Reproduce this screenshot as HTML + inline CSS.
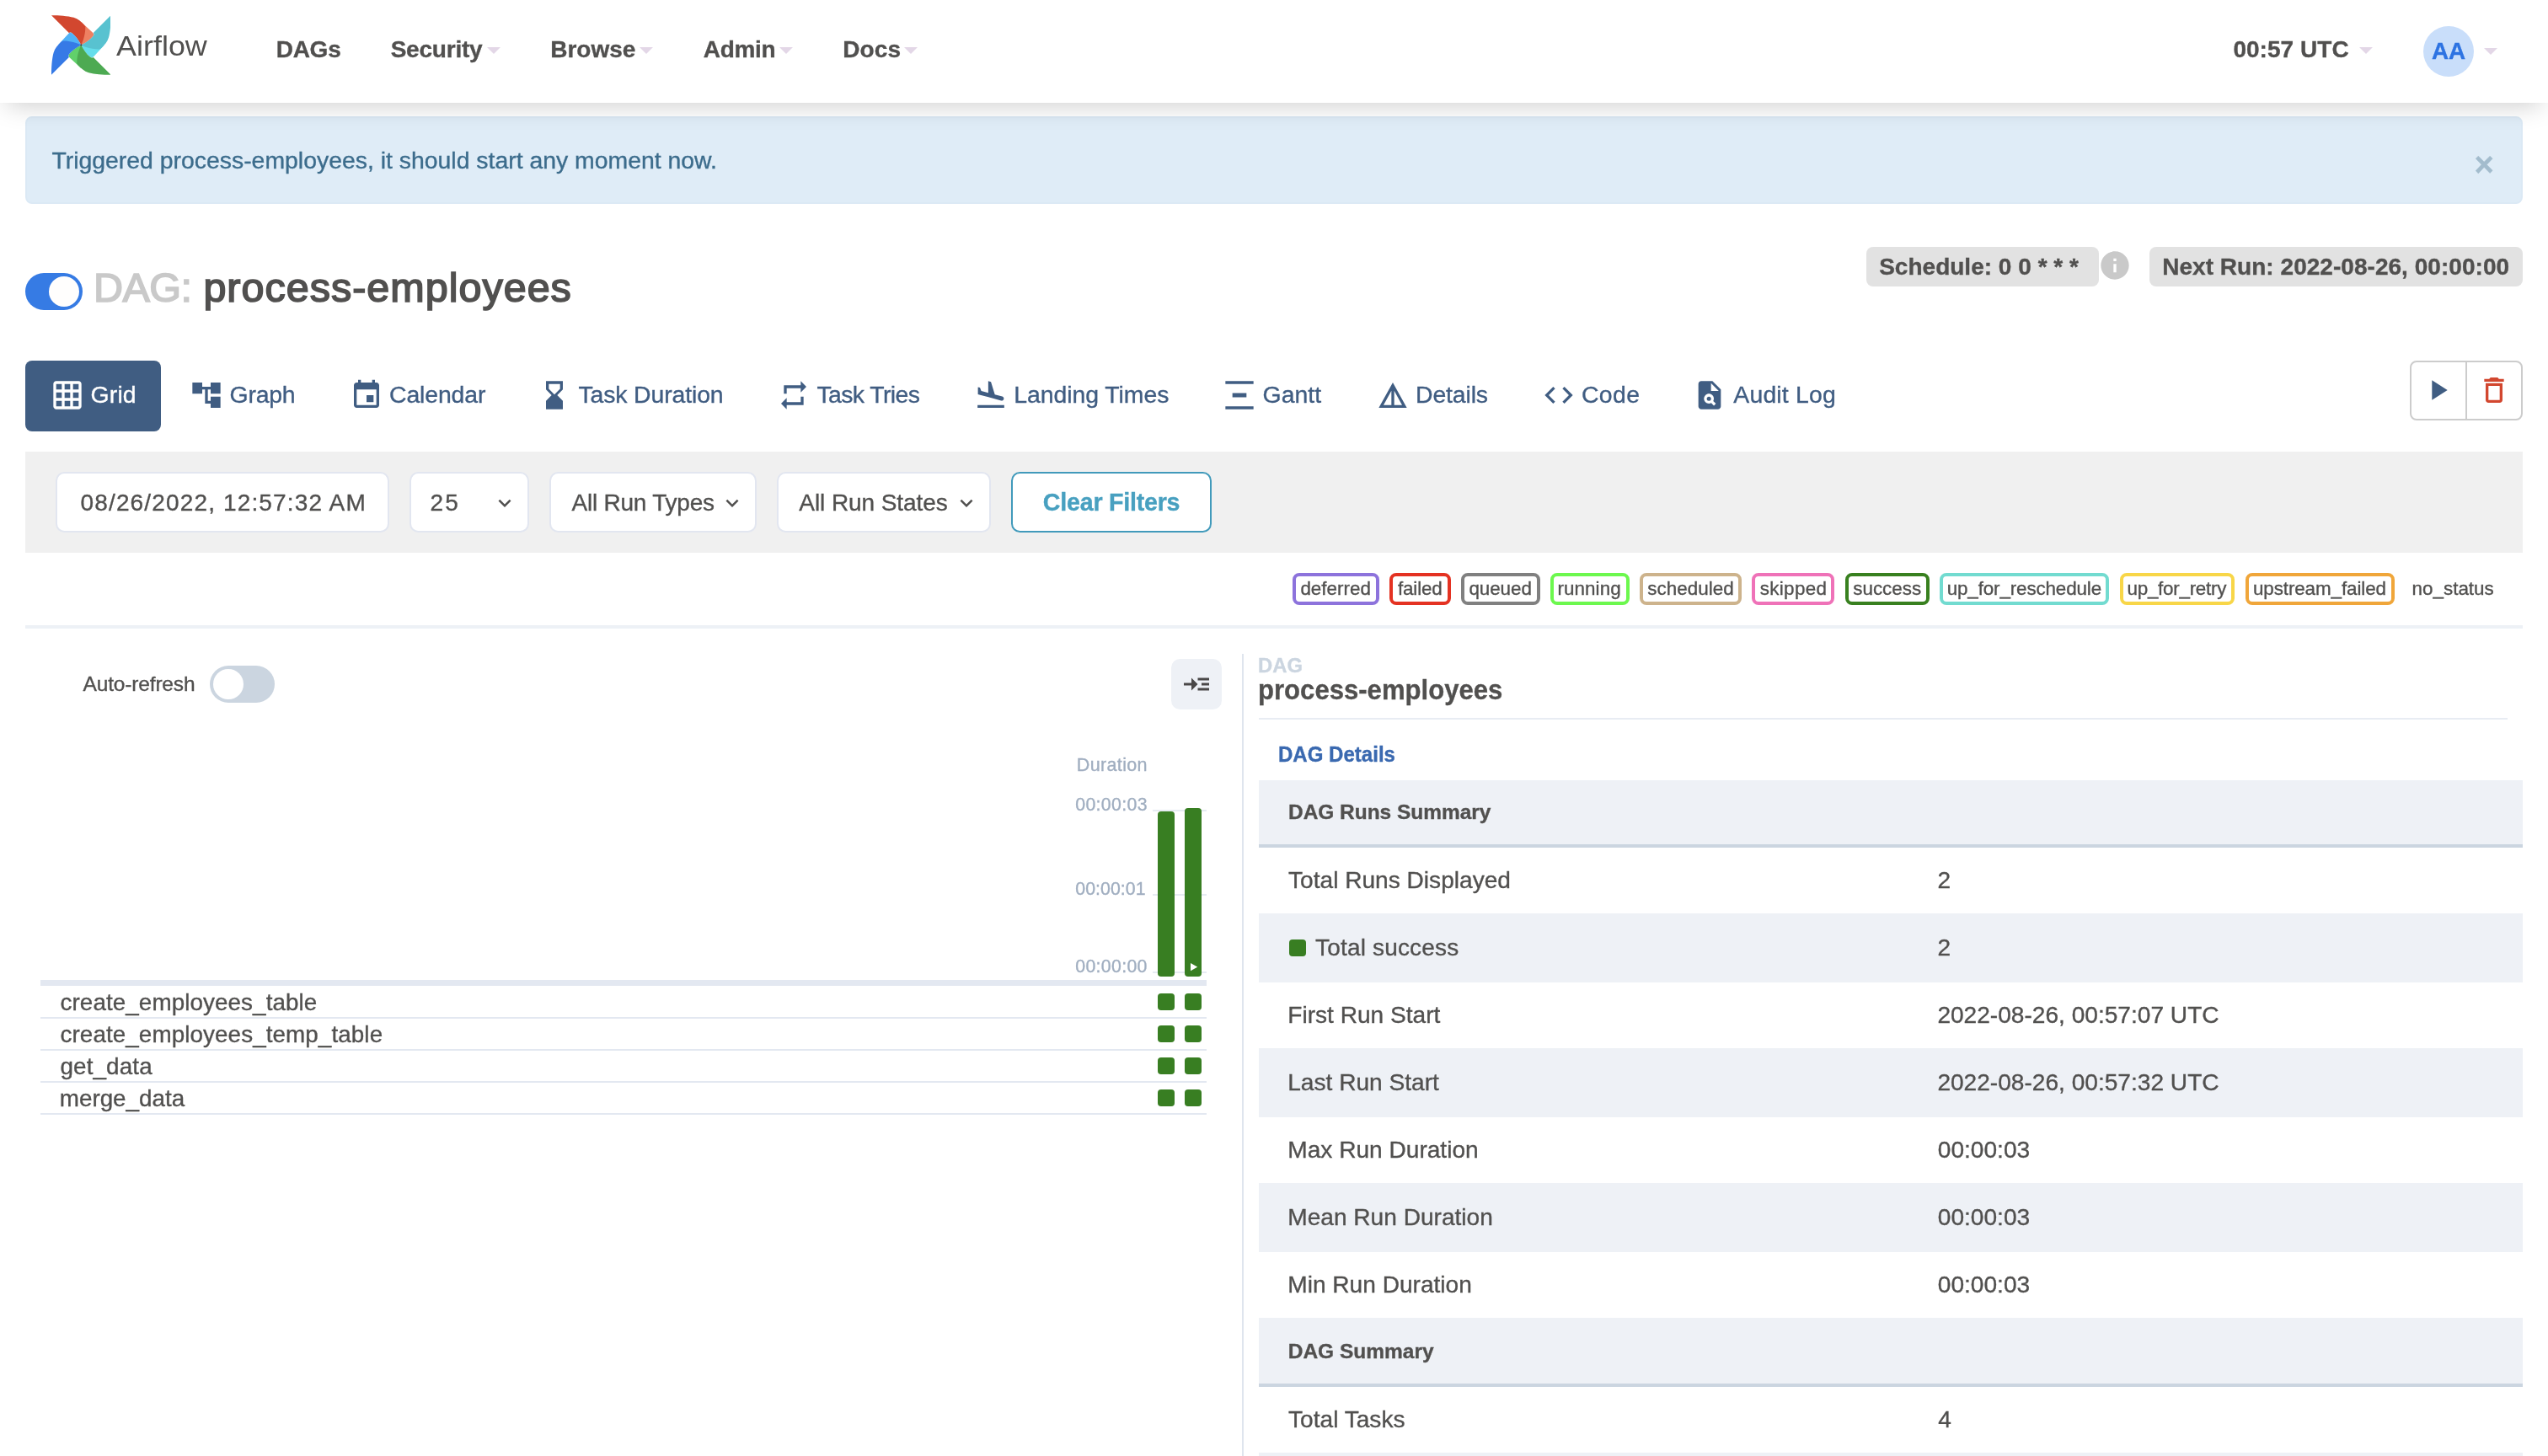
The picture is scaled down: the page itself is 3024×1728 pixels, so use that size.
<!DOCTYPE html>
<html lang="en"><head><meta charset="utf-8"><title>process-employees - Grid - Airflow</title>
<style>
html,body{margin:0;padding:0;background:#fff}
body{width:3024px;height:1728px;overflow:hidden;position:relative;font-family:"Liberation Sans",Arial,Helvetica,sans-serif}
.b{position:absolute;display:block}
.t{position:absolute;display:block;white-space:pre;margin:0;-webkit-text-stroke:0.35px currentColor}
</style></head><body>
<div id="root" style="position:absolute;left:0;top:0;width:3024px;height:1728px;will-change:transform">
<div id="navbar" class="b" style="left:0;top:0;width:3024px;height:122px;background:#fff;box-shadow:0 10px 28px -8px rgba(0,0,0,.21);z-index:5"></div>
<div id="navc" class="b" style="left:0;top:0;width:3024px;height:122px;z-index:6">
<svg class="b" style="left:60.7px;top:18px" width="70.6" height="71" viewBox="0 0 100 100"><g transform="rotate(0 50 50)"><path d="M50,11 L69.5,29 Q72.5,32 70,35 C65,41 59,46 50,50 L52,30 Z" fill="#ee8062"/><path d="M0,0 C13,0 27,0.8 37.4,3.7 C45,5.8 50,11 55,16 L57,19 C57.5,30 54,42 50,50 C46,42 41,35 35,30 Q32,27.5 29.5,29.5 Z" fill="#d2472f"/></g><g transform="rotate(90 50 50)"><path d="M50,11 L69.5,29 Q72.5,32 70,35 C65,41 59,46 50,50 L52,30 Z" fill="#66deeb"/><path d="M0,0 C13,0 27,0.8 37.4,3.7 C45,5.8 50,11 55,16 L57,19 C57.5,30 54,42 50,50 C46,42 41,35 35,30 Q32,27.5 29.5,29.5 Z" fill="#58c2d0"/></g><g transform="rotate(180 50 50)"><path d="M50,11 L69.5,29 Q72.5,32 70,35 C65,41 59,46 50,50 L52,30 Z" fill="#61d06b"/><path d="M0,0 C13,0 27,0.8 37.4,3.7 C45,5.8 50,11 55,16 L57,19 C57.5,30 54,42 50,50 C46,42 41,35 35,30 Q32,27.5 29.5,29.5 Z" fill="#4daa52"/></g><g transform="rotate(270 50 50)"><path d="M50,11 L69.5,29 Q72.5,32 70,35 C65,41 59,46 50,50 L52,30 Z" fill="#50b2f7"/><path d="M0,0 C13,0 27,0.8 37.4,3.7 C45,5.8 50,11 55,16 L57,19 C57.5,30 54,42 50,50 C46,42 41,35 35,30 Q32,27.5 29.5,29.5 Z" fill="#367ae6"/></g><circle cx="50" cy="50" r="1.6" fill="#4a4848"/></svg>
<span class="t " style="left:137.60px;top:38.00px;font-size:33.40px;line-height:33.40px;color:#51504f;-webkit-text-stroke:0;transform:scaleX(1.0761);transform-origin:0 0;">Airflow</span>
<span class="t " style="left:327.68px;top:45.00px;font-size:28.00px;line-height:28.00px;color:#51504f;font-weight:700;letter-spacing:-0.253px;">DAGs</span>
<span class="t " style="left:463.66px;top:45.00px;font-size:28.00px;line-height:28.00px;color:#51504f;font-weight:700;letter-spacing:-0.211px;">Security</span>
<div class="b" style="left:578px;top:56px;width:0;height:0;border-left:8px solid transparent;border-right:8px solid transparent;border-top:8px solid #e3d7e7"></div>
<span class="t " style="left:653.18px;top:45.00px;font-size:28.00px;line-height:28.00px;color:#51504f;font-weight:700;letter-spacing:0.016px;">Browse</span>
<div class="b" style="left:759px;top:56px;width:0;height:0;border-left:8px solid transparent;border-right:8px solid transparent;border-top:8px solid #e3d7e7"></div>
<span class="t " style="left:834.80px;top:45.00px;font-size:28.00px;line-height:28.00px;color:#51504f;font-weight:700;letter-spacing:-0.300px;">Admin</span>
<div class="b" style="left:925px;top:56px;width:0;height:0;border-left:8px solid transparent;border-right:8px solid transparent;border-top:8px solid #e3d7e7"></div>
<span class="t " style="left:1000.18px;top:45.00px;font-size:28.00px;line-height:28.00px;color:#51504f;font-weight:700;letter-spacing:0.160px;">Docs</span>
<div class="b" style="left:1073px;top:56px;width:0;height:0;border-left:8px solid transparent;border-right:8px solid transparent;border-top:8px solid #e3d7e7"></div>
<span class="t " style="left:2650.38px;top:45.00px;font-size:28.00px;line-height:28.00px;color:#51504f;font-weight:700;letter-spacing:0.050px;">00:57 UTC</span>
<div class="b" style="left:2800px;top:56px;width:0;height:0;border-left:8px solid transparent;border-right:8px solid transparent;border-top:8px solid #e3d7e7"></div>
<div class="b " style="left:2876px;top:31px;width:60px;height:60px;background:#c9defa;border-radius:50%"></div>
<span class="t " style="left:2885.60px;top:47.00px;font-size:27.40px;line-height:27.40px;color:#2d73e2;font-weight:700;transform:scaleX(1.0161);transform-origin:0 0;">AA</span>
<div class="b" style="left:2948px;top:56.5px;width:0;height:0;border-left:8px solid transparent;border-right:8px solid transparent;border-top:8px solid #e3d7e7"></div>
</div>
<div class="b " style="left:30px;top:138px;width:2964px;height:104px;background:#dfecf7;border-radius:8px;border:2px solid #dbe9f5;box-sizing:border-box"></div>
<span class="t " style="left:61.43px;top:176.00px;font-size:28.40px;line-height:28.40px;color:#3c6c8c;">Triggered process-employees, it should start any moment now.</span>
<span class="t " style="left:2936.40px;top:175.00px;font-size:40.00px;line-height:40.00px;color:#a3bccd;font-weight:700;">×</span>
<div class="b " style="left:30px;top:324px;width:68px;height:44px;background:#367be4;border-radius:22px"></div>
<div class="b " style="left:58px;top:328px;width:36px;height:36px;background:#fffefd;border-radius:50%"></div>
<span class="t " style="left:110.97px;top:317.00px;font-size:48.50px;line-height:48.50px;color:#c9c9c9;letter-spacing:-0.512px;-webkit-text-stroke:1.70px #c9c9c9;">DAG:</span>
<span class="t " style="left:241.40px;top:317.00px;font-size:48.50px;line-height:48.50px;color:#51504f;letter-spacing:0.997px;-webkit-text-stroke:1.70px #51504f;">process-employees</span>
<div class="b " style="left:2215px;top:293px;width:276px;height:47px;background:#e2e2e2;border-radius:8px"></div>
<span class="t " style="left:2230.16px;top:303.00px;font-size:28.00px;line-height:28.00px;color:#51504f;font-weight:700;letter-spacing:0.013px;">Schedule: 0 0 * * *</span>
<svg class="b" style="left:2490px;top:295px;" width="40" height="40" viewBox="0 0 24 24"><path fill="#c9c9c9" d="M12 2C6.48 2 2 6.48 2 12s4.48 10 10 10 10-4.48 10-10S17.52 2 12 2zm1 15h-2v-6h2v6zm0-8h-2V7h2v2z"/></svg>
<div class="b " style="left:2551px;top:293px;width:443px;height:47px;background:#e2e2e2;border-radius:8px"></div>
<span class="t " style="left:2566.18px;top:303.00px;font-size:28.00px;line-height:28.00px;color:#51504f;font-weight:700;letter-spacing:0.036px;">Next Run: 2022-08-26, 00:00:00</span>
<div class="b " style="left:30px;top:428px;width:161px;height:84px;background:#405d82;border-radius:8px"></div>
<svg class="b" style="left:59.7px;top:449px;" width="40" height="40" viewBox="0 0 24 24"><path fill="#fff" d="M20 2H4c-1.1 0-2 .9-2 2v16c0 1.1.9 2 2 2h16c1.1 0 2-.9 2-2V4c0-1.1-.9-2-2-2zM8 20H4v-4h4v4zm0-6H4v-4h4v4zm0-6H4V4h4v4zm6 12h-4v-4h4v4zm0-6h-4v-4h4v4zm0-6h-4V4h4v4zm6 12h-4v-4h4v4zm0-6h-4v-4h4v4zm0-6h-4V4h4v4z"/></svg>
<span class="t " style="left:107.58px;top:454.00px;font-size:28.40px;line-height:28.40px;color:#fff;letter-spacing:0.149px;">Grid</span>
<svg class="b" style="left:224.7px;top:449px;" width="40" height="40" viewBox="0 0 24 24"><path fill="#405d82" d="M22 11V3h-7v3H9V3H2v8h7V8h2v10h4v3h7v-8h-7v3h-2V8h2v3z"/></svg>
<span class="t " style="left:272.58px;top:454.00px;font-size:28.40px;line-height:28.40px;color:#405d82;letter-spacing:-0.207px;">Graph</span>
<svg class="b" style="left:415px;top:449px;" width="40" height="40" viewBox="0 0 24 24"><path fill="#405d82" d="M17 12h-5v5h5v-5zM16 1v2H8V1H6v2H5c-1.11 0-1.99.9-1.99 2L3 19c0 1.1.89 2 2 2h14c1.1 0 2-.9 2-2V5c0-1.1-.9-2-2-2h-1V1h-2zm3 18H5V8h14v11z"/></svg>
<span class="t " style="left:462.08px;top:454.00px;font-size:28.40px;line-height:28.40px;color:#405d82;letter-spacing:-0.137px;">Calendar</span>
<svg class="b" style="left:638px;top:449px;" width="40" height="40" viewBox="0 0 24 24"><path fill="#405d82" d="M18 22l-.01-6L14 12l3.99-4.01L18 2H6v6l4 4-4 3.99V22h12zM8 7.5V4h8v3.5l-4 4-4-4z"/></svg>
<span class="t " style="left:686.43px;top:454.00px;font-size:28.40px;line-height:28.40px;color:#405d82;letter-spacing:-0.116px;">Task Duration</span>
<svg class="b" style="left:922px;top:449px;" width="40" height="40" viewBox="0 0 24 24"><path fill="#405d82" d="M7 7h10v3l4-4-4-4v3H5v6h2V7zm10 10H7v-3l-4 4 4 4v-3h12v-6h-2v4z"/></svg>
<span class="t " style="left:969.43px;top:454.00px;font-size:28.40px;line-height:28.40px;color:#405d82;letter-spacing:-0.582px;">Task Tries</span>
<svg class="b" style="left:1156px;top:449px;" width="40" height="40" viewBox="0 0 24 24"><path fill="#405d82" d="M2.5 19h19v2h-19zm7.18-5.73l4.35 1.16 5.31 1.42c.8.21 1.62-.26 1.84-1.06.21-.8-.26-1.62-1.06-1.84l-5.31-1.42-2.76-9.02L10.12 2v8.28L5.15 8.95l-.93-2.32-1.45-.39v5.17l1.6.43 5.31 1.43z"/></svg>
<span class="t " style="left:1203.23px;top:454.00px;font-size:28.40px;line-height:28.40px;color:#405d82;letter-spacing:-0.040px;">Landing Times</span>
<svg class="b" style="left:1450.5px;top:449px;" width="40" height="40" viewBox="0 0 24 24"><path fill="#405d82" d="M22 2v2H2V2h20zM7 10.5v3h10v-3H7zM2 20v2h20v-2H2z"/></svg>
<span class="t " style="left:1498.58px;top:454.00px;font-size:28.40px;line-height:28.40px;color:#405d82;letter-spacing:0.031px;">Gantt</span>
<svg class="b" style="left:1632.5px;top:449px;" width="40" height="40" viewBox="0 0 24 24"><path fill="#405d82" d="M12 3L2 21h20L12 3zm1 5.92L18.6 19H13V8.92zm-2 0V19H5.4L11 8.92z"/></svg>
<span class="t " style="left:1680.03px;top:454.00px;font-size:28.40px;line-height:28.40px;color:#405d82;letter-spacing:-0.133px;">Details</span>
<svg class="b" style="left:1830px;top:449px;" width="40" height="40" viewBox="0 0 24 24"><path fill="#405d82" d="M9.4 16.6L4.8 12l4.6-4.6L8 6l-6 6 6 6 1.4-1.4zm5.2 0l4.6-4.6-4.6-4.6L16 6l6 6-6 6-1.4-1.4z"/></svg>
<span class="t " style="left:1876.88px;top:454.00px;font-size:28.40px;line-height:28.40px;color:#405d82;letter-spacing:0.460px;">Code</span>
<svg class="b" style="left:2008.5px;top:449px;" width="40" height="40" viewBox="0 0 24 24"><path fill="#405d82" d="M14 2H6c-1.1 0-2 .9-2 2v16c0 1.1.9 2 2 2h12c1.1 0 2-.9 2-2V8l-6-6zm1.04 17.45l-1.88-1.88c-1.33.71-3.01.53-4.13-.59-1.37-1.37-1.37-3.58 0-4.95 1.37-1.37 3.58-1.37 4.95 0 1.12 1.12 1.31 2.8.59 4.13l1.88 1.88-1.41 1.41zM13 9V3.5L18.5 9H13z"/><circle cx="11.5" cy="14.5" r="1.5" fill="#405d82"/></svg>
<span class="t " style="left:2057.30px;top:454.00px;font-size:28.40px;line-height:28.40px;color:#405d82;letter-spacing:0.177px;">Audit Log</span>
<div class="b " style="left:2860px;top:428px;width:134px;height:71px;background:#fff;border:2px solid #ccc;border-radius:8px;box-sizing:border-box"></div>
<div class="b " style="left:2926px;top:428px;width:2px;height:71px;background:#ccc;"></div>
<svg class="b" style="left:2873px;top:443px;" width="40" height="40" viewBox="0 0 24 24"><path fill="#405d82" d="M8 5v14l11-7z"/></svg>
<svg class="b" style="left:2940px;top:443.4px;" width="40" height="40" viewBox="0 0 24 24"><path fill="#d2472f" d="M6 19c0 1.1.9 2 2 2h8c1.1 0 2-.9 2-2V7H6v12zM8 9h8v10H8V9zm7.5-5l-1-1h-5l-1 1H5v2h14V4z"/></svg>
<div class="b " style="left:30px;top:536px;width:2964px;height:120px;background:#f0f0f0;"></div>
<div class="b " style="left:66px;top:560px;width:396px;height:72px;background:#fff;border:2px solid #e2e6f0;border-radius:10.5px;box-sizing:border-box"></div>
<span class="t " style="left:95.52px;top:583.00px;font-size:28.00px;line-height:28.00px;color:#51504f;letter-spacing:1.149px;">08/26/2022, 12:57:32 AM</span>
<div class="b " style="left:486px;top:560px;width:142px;height:72px;background:#fff;border:2px solid #e2e6f0;border-radius:10.5px;box-sizing:border-box"></div>
<span class="t " style="left:510.60px;top:583.00px;font-size:28.00px;line-height:28.00px;color:#51504f;letter-spacing:2.040px;">25</span>
<svg class="b" style="left:583.5px;top:582.3px;" width="30" height="30" viewBox="0 0 24 24"><path fill="#51504f" d="M16.59 8.59L12 13.17 7.41 8.59 6 10l6 6 6-6z"/></svg>
<div class="b " style="left:652px;top:560px;width:246px;height:72px;background:#fff;border:2px solid #e2e6f0;border-radius:10.5px;box-sizing:border-box"></div>
<span class="t " style="left:678.50px;top:583.00px;font-size:28.00px;line-height:28.00px;color:#51504f;letter-spacing:-0.227px;">All Run Types</span>
<svg class="b" style="left:853.7px;top:582.3px;" width="30" height="30" viewBox="0 0 24 24"><path fill="#51504f" d="M16.59 8.59L12 13.17 7.41 8.59 6 10l6 6 6-6z"/></svg>
<div class="b " style="left:922px;top:560px;width:254px;height:72px;background:#fff;border:2px solid #e2e6f0;border-radius:10.5px;box-sizing:border-box"></div>
<span class="t " style="left:948.30px;top:583.00px;font-size:28.00px;line-height:28.00px;color:#51504f;letter-spacing:-0.077px;">All Run States</span>
<svg class="b" style="left:1132px;top:582.3px;" width="30" height="30" viewBox="0 0 24 24"><path fill="#51504f" d="M16.59 8.59L12 13.17 7.41 8.59 6 10l6 6 6-6z"/></svg>
<div class="b " style="left:1200px;top:560px;width:238px;height:72px;background:#fff;border:2px solid #419abb;border-radius:10.5px;box-sizing:border-box"></div>
<span class="t " style="left:1237.86px;top:582.00px;font-size:28.60px;line-height:28.60px;color:#48a0c0;font-weight:700;letter-spacing:-0.218px;">Clear Filters</span>
<div class="b " style="left:1534px;top:680px;width:103px;height:37.6px;background:#fff;border:4px solid #8d73dc;border-radius:8px;box-sizing:border-box"></div>
<span class="t " style="left:1543.40px;top:688.00px;font-size:22.40px;line-height:22.40px;color:#51504f;letter-spacing:0.014px;">deferred</span>
<div class="b " style="left:1649px;top:680px;width:73px;height:37.6px;background:#fff;border:4px solid #e43222;border-radius:8px;box-sizing:border-box"></div>
<span class="t " style="left:1658.98px;top:688.00px;font-size:22.40px;line-height:22.40px;color:#51504f;letter-spacing:-0.154px;">failed</span>
<div class="b " style="left:1734px;top:680px;width:94px;height:37.6px;background:#fff;border:4px solid #808080;border-radius:8px;box-sizing:border-box"></div>
<span class="t " style="left:1743.40px;top:688.00px;font-size:22.40px;line-height:22.40px;color:#51504f;letter-spacing:-0.053px;">queued</span>
<div class="b " style="left:1840px;top:680px;width:94px;height:37.6px;background:#fff;border:4px solid #6cf84e;border-radius:8px;box-sizing:border-box"></div>
<span class="t " style="left:1848.54px;top:688.00px;font-size:22.40px;line-height:22.40px;color:#51504f;letter-spacing:0.066px;">running</span>
<div class="b " style="left:1946px;top:680px;width:121px;height:37.6px;background:#fff;border:4px solid #cdb38c;border-radius:8px;box-sizing:border-box"></div>
<span class="t " style="left:1955.34px;top:688.00px;font-size:22.40px;line-height:22.40px;color:#51504f;letter-spacing:0.033px;">scheduled</span>
<div class="b " style="left:2079px;top:680px;width:98px;height:37.6px;background:#fff;border:4px solid #ef72b8;border-radius:8px;box-sizing:border-box"></div>
<span class="t " style="left:2088.74px;top:688.00px;font-size:22.40px;line-height:22.40px;color:#51504f;letter-spacing:0.339px;">skipped</span>
<div class="b " style="left:2190px;top:680px;width:100px;height:37.6px;background:#fff;border:4px solid #38801f;border-radius:8px;box-sizing:border-box"></div>
<span class="t " style="left:2199.24px;top:688.00px;font-size:22.40px;line-height:22.40px;color:#51504f;">success</span>
<div class="b " style="left:2302px;top:680px;width:201px;height:37.6px;background:#fff;border:4px solid #72dbd0;border-radius:8px;box-sizing:border-box"></div>
<span class="t " style="left:2310.74px;top:688.00px;font-size:22.40px;line-height:22.40px;color:#51504f;letter-spacing:-0.133px;">up_for_reschedule</span>
<div class="b " style="left:2516px;top:680px;width:136px;height:37.6px;background:#fff;border:4px solid #f8d648;border-radius:8px;box-sizing:border-box"></div>
<span class="t " style="left:2524.54px;top:688.00px;font-size:22.40px;line-height:22.40px;color:#51504f;letter-spacing:-0.262px;">up_for_retry</span>
<div class="b " style="left:2665px;top:680px;width:177px;height:37.6px;background:#fff;border:4px solid #f0a63a;border-radius:8px;box-sizing:border-box"></div>
<span class="t " style="left:2673.94px;top:688.00px;font-size:22.40px;line-height:22.40px;color:#51504f;letter-spacing:-0.091px;">upstream_failed</span>
<span class="t " style="left:2862.54px;top:688.00px;font-size:22.40px;line-height:22.40px;color:#51504f;letter-spacing:0.017px;">no_status</span>
<div class="b " style="left:30px;top:742px;width:2964px;height:4px;background:#edf1f6;"></div>
<span class="t " style="left:98.60px;top:800.00px;font-size:24.50px;line-height:24.50px;color:#51504f;letter-spacing:-0.171px;">Auto-refresh</span>
<div class="b " style="left:249px;top:790px;width:77px;height:44px;background:#cbd5e0;border-radius:22px"></div>
<div class="b " style="left:253px;top:794px;width:36px;height:36px;background:#fff;border-radius:50%"></div>
<div class="b " style="left:1390px;top:782px;width:60px;height:60px;background:#eef1f6;border-radius:10.5px"></div>
<svg class="b" style="left:1402px;top:794.2px;" width="36" height="36" viewBox="0 0 24 24"><path fill="#4a4848" d="M13 7h9v2h-9zM13 15h9v2h-9zM16 11h6v2h-6zM13 12L8 7v4H2v2h6v4z"/></svg>
<span class="t " style="left:1277.78px;top:898.00px;font-size:21.50px;line-height:21.50px;color:#a0aec0;letter-spacing:0.363px;">Duration</span>
<span class="t " style="left:1276.25px;top:945.00px;font-size:21.30px;line-height:21.30px;color:#a0aec0;letter-spacing:0.334px;">00:00:03</span>
<span class="t " style="left:1276.25px;top:1045.00px;font-size:21.30px;line-height:21.30px;color:#a0aec0;letter-spacing:0.064px;">00:00:01</span>
<span class="t " style="left:1276.25px;top:1137.00px;font-size:21.30px;line-height:21.30px;color:#a0aec0;letter-spacing:0.319px;">00:00:00</span>
<div class="b " style="left:1368px;top:961px;width:64px;height:2px;background:#e6ebf2;"></div>
<div class="b " style="left:1368px;top:1061px;width:64px;height:2px;background:#e6ebf2;"></div>
<div class="b " style="left:1368px;top:1152.6px;width:64px;height:2px;background:#e6ebf2;"></div>
<div class="b " style="left:1374px;top:963px;width:20px;height:196px;background:#387e22;border-radius:4px"></div>
<div class="b " style="left:1406px;top:959px;width:20px;height:200px;background:#387e22;border-radius:4px"></div>
<svg class="b" style="left:1412.6px;top:1143.4px" width="8.2" height="9.2" viewBox="0 0 8 9"><path d="M0 0L8 4.5L0 9Z" fill="#fff"/></svg>
<div class="b " style="left:48px;top:1163px;width:1384px;height:7px;background:#e3e8f1;"></div>
<div class="b " style="left:48px;top:1207px;width:1384px;height:2px;background:#e3e8f1;"></div>
<span class="t " style="left:71.49px;top:1176.00px;font-size:27.80px;line-height:27.80px;color:#51504f;letter-spacing:0.093px;">create_employees_table</span>
<div class="b " style="left:1374px;top:1179px;width:20px;height:20px;background:#387e22;border-radius:4px"></div>
<div class="b " style="left:1406px;top:1179px;width:20px;height:20px;background:#387e22;border-radius:4px"></div>
<div class="b " style="left:48px;top:1245px;width:1384px;height:2px;background:#e3e8f1;"></div>
<span class="t " style="left:71.49px;top:1214.00px;font-size:27.80px;line-height:27.80px;color:#51504f;letter-spacing:0.095px;">create_employees_temp_table</span>
<div class="b " style="left:1374px;top:1217px;width:20px;height:20px;background:#387e22;border-radius:4px"></div>
<div class="b " style="left:1406px;top:1217px;width:20px;height:20px;background:#387e22;border-radius:4px"></div>
<div class="b " style="left:48px;top:1283px;width:1384px;height:2px;background:#e3e8f1;"></div>
<span class="t " style="left:71.49px;top:1252.00px;font-size:27.80px;line-height:27.80px;color:#51504f;letter-spacing:0.133px;">get_data</span>
<div class="b " style="left:1374px;top:1255px;width:20px;height:20px;background:#387e22;border-radius:4px"></div>
<div class="b " style="left:1406px;top:1255px;width:20px;height:20px;background:#387e22;border-radius:4px"></div>
<div class="b " style="left:48px;top:1321px;width:1384px;height:2px;background:#e3e8f1;"></div>
<span class="t " style="left:70.79px;top:1290.00px;font-size:27.80px;line-height:27.80px;color:#51504f;letter-spacing:-0.005px;">merge_data</span>
<div class="b " style="left:1374px;top:1293px;width:20px;height:20px;background:#387e22;border-radius:4px"></div>
<div class="b " style="left:1406px;top:1293px;width:20px;height:20px;background:#387e22;border-radius:4px"></div>
<div class="b " style="left:1474px;top:776px;width:2px;height:952px;background:#dfe5ee;"></div>
<span class="t " style="left:1493.45px;top:778.00px;font-size:24.00px;line-height:24.00px;color:#cbd5e0;font-weight:700;transform:scaleX(0.9921);transform-origin:0 0;">DAG</span>
<span class="t " style="left:1492.78px;top:803.00px;font-size:32.60px;line-height:32.60px;color:#51504f;font-weight:700;transform:scaleX(0.9545);transform-origin:0 0;">process-employees</span>
<div class="b " style="left:1494px;top:852px;width:1482px;height:2px;background:#e8ecf3;"></div>
<span class="t " style="left:1517.44px;top:883.00px;font-size:24.90px;line-height:24.90px;color:#3a69b0;font-weight:700;transform:scaleX(0.9660);transform-origin:0 0;">DAG Details</span>
<div class="b " style="left:1494px;top:926px;width:1500px;height:76px;background:#eef1f6;"></div>
<div class="b " style="left:1494px;top:1002px;width:1500px;height:4px;background:#cbd5e0;"></div>
<span class="t " style="left:1528.71px;top:952.00px;font-size:24.50px;line-height:24.50px;color:#51504f;font-weight:700;transform:scaleX(0.9977);transform-origin:0 0;">DAG Runs Summary</span>
<span class="t " style="left:1529.04px;top:1031.00px;font-size:28.10px;line-height:28.10px;color:#51504f;">Total Runs Displayed</span>
<span class="t " style="left:2299.39px;top:1031.00px;font-size:28.10px;line-height:28.10px;color:#51504f;">2</span>
<div class="b " style="left:1494px;top:1084px;width:1500px;height:82px;background:#eef1f6;"></div>
<div class="b " style="left:1530px;top:1115px;width:20px;height:20px;background:#387e22;border-radius:4px"></div>
<span class="t " style="left:1561.04px;top:1111.00px;font-size:28.00px;line-height:28.00px;color:#51504f;letter-spacing:0.175px;">Total success</span>
<span class="t " style="left:2299.39px;top:1111.00px;font-size:28.10px;line-height:28.10px;color:#51504f;">2</span>
<span class="t " style="left:1528.25px;top:1191.00px;font-size:28.10px;line-height:28.10px;color:#51504f;">First Run Start</span>
<span class="t " style="left:2299.39px;top:1191.00px;font-size:28.10px;line-height:28.10px;color:#51504f;">2022-08-26, 00:57:07 UTC</span>
<div class="b " style="left:1494px;top:1244px;width:1500px;height:82px;background:#eef1f6;"></div>
<span class="t " style="left:1528.25px;top:1271.00px;font-size:28.10px;line-height:28.10px;color:#51504f;">Last Run Start</span>
<span class="t " style="left:2299.39px;top:1271.00px;font-size:28.10px;line-height:28.10px;color:#51504f;">2022-08-26, 00:57:32 UTC</span>
<span class="t " style="left:1528.25px;top:1351.00px;font-size:28.10px;line-height:28.10px;color:#51504f;">Max Run Duration</span>
<span class="t " style="left:2299.82px;top:1351.00px;font-size:28.10px;line-height:28.10px;color:#51504f;">00:00:03</span>
<div class="b " style="left:1494px;top:1404px;width:1500px;height:82px;background:#eef1f6;"></div>
<span class="t " style="left:1528.25px;top:1431.00px;font-size:28.10px;line-height:28.10px;color:#51504f;">Mean Run Duration</span>
<span class="t " style="left:2299.82px;top:1431.00px;font-size:28.10px;line-height:28.10px;color:#51504f;">00:00:03</span>
<span class="t " style="left:1528.25px;top:1511.00px;font-size:28.10px;line-height:28.10px;color:#51504f;">Min Run Duration</span>
<span class="t " style="left:2299.82px;top:1511.00px;font-size:28.10px;line-height:28.10px;color:#51504f;">00:00:03</span>
<div class="b " style="left:1494px;top:1564px;width:1500px;height:78px;background:#eef1f6;"></div>
<div class="b " style="left:1494px;top:1642px;width:1500px;height:4px;background:#cbd5e0;"></div>
<span class="t " style="left:1528.71px;top:1592.00px;font-size:24.50px;line-height:24.50px;color:#51504f;font-weight:700;">DAG Summary</span>
<span class="t " style="left:1529.04px;top:1671.00px;font-size:28.10px;line-height:28.10px;color:#51504f;">Total Tasks</span>
<span class="t " style="left:2300.24px;top:1671.00px;font-size:28.10px;line-height:28.10px;color:#51504f;">4</span>
<div class="b " style="left:1494px;top:1724px;width:1500px;height:10px;background:#eef1f6;"></div>
</div>
</body></html>
